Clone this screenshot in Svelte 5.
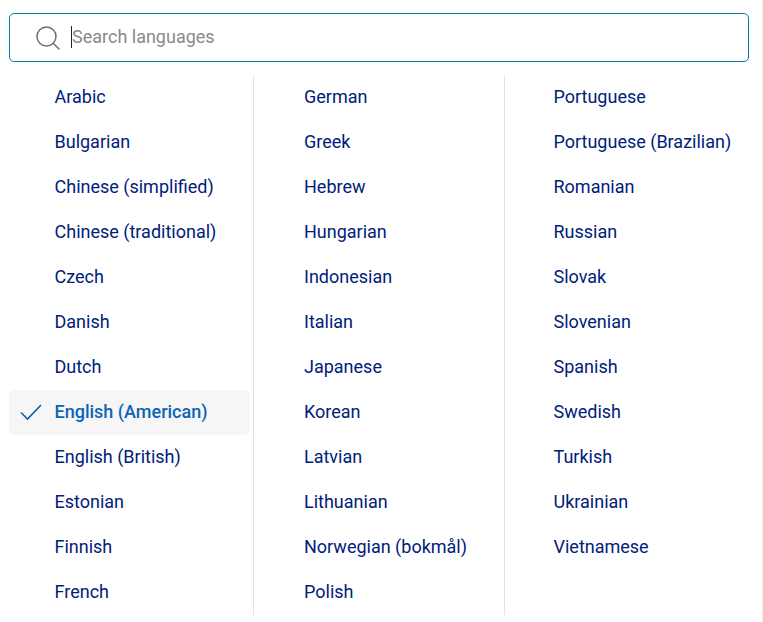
<script>
  const columns = [
    ['Arabic', 'Bulgarian', 'Chinese (simplified)', 'Chinese (traditional)', 'Czech', 'Danish', 'Dutch', 'English (American)', 'English (British)', 'Estonian', 'Finnish', 'French'],
    ['German', 'Greek', 'Hebrew', 'Hungarian', 'Indonesian', 'Italian', 'Japanese', 'Korean', 'Latvian', 'Lithuanian', 'Norwegian (bokmål)', 'Polish'],
    ['Portuguese', 'Portuguese (Brazilian)', 'Romanian', 'Russian', 'Slovak', 'Slovenian', 'Spanish', 'Swedish', 'Turkish', 'Ukrainian', 'Vietnamese']
  ]
  const selected = 'English (American)'
</script>

<div class="picker">
  <div class="search">
    <svg class="search__icon" width="26" height="26" viewBox="0 0 26 26" fill="none" stroke="#6f6f6f" stroke-width="1.5">
      <circle cx="11.5" cy="11.5" r="9.5" />
      <path d="M18.5 18.5 L24 24" stroke-linecap="round" />
    </svg>
    <span class="search__caret"></span>
    <span class="search__placeholder">Search languages</span>
  </div>

  <div class="columns">
    {#each columns as column}
      <ul class="column">
        {#each column as lang}
          <li class="item" class:item--selected={lang === selected}>
            {#if lang === selected}
              <svg class="item__check" width="24" height="18" viewBox="0 0 24 18" fill="none" stroke="#0b5cad" stroke-width="1.6">
                <path d="M2 9.5 L8.5 16 L22 2" />
              </svg>
            {/if}
            {lang}
          </li>
        {/each}
      </ul>
    {/each}
  </div>
</div>

<style>
  :global(body) {
    margin: 0;
    background: #fff;
  }
  .picker {
    box-sizing: border-box;
    width: 763px;
    height: 622px;
    padding: 13px 1px 0 9px;
    border-right: 1px solid #ececec;
    font-family: Roboto, "Liberation Sans", sans-serif;
    overflow: hidden;
  }
  .search {
    box-sizing: border-box;
    width: 740px;
    height: 49px;
    border: 1px solid #0b7aa8;
    border-radius: 5px;
    display: flex;
    align-items: center;
    padding: 0 0 1px 25px;
  }
  .search__icon {
    flex: none;
    margin-right: 10px;
    margin-top: 1px;
  }
  .search__caret {
    width: 1px;
    height: 22px;
    background: #222;
    flex: none;
  }
  .search__placeholder {
    font-size: 18px;
    color: #8a8a8a;
    margin-bottom: 2px;
  }
  .columns {
    display: grid;
    grid-template-columns: 244px 251px 250px;
    margin-top: 13px;
  }
  .column {
    list-style: none;
    margin: 0;
    padding: 0 3px 0 0;
    height: 540px;
  }
  .column + .column {
    border-left: 1px solid #e2e2e2;
    padding-left: 3px;
  }
  .column:nth-child(2) {
    padding-left: 4px;
  }
  .item {
    position: relative;
    box-sizing: border-box;
    height: 45px;
    line-height: 44px;
    padding-left: 45.5px;
    font-size: 18px;
    color: #00207a;
    white-space: nowrap;
  }
  .column:nth-child(2) .item {
    padding-left: 46px;
  }
  .item--selected {
    background: #f6f6f6;
    border-radius: 5px;
    color: #0b64b8;
    font-weight: 500;
  }
  .item__check {
    position: absolute;
    left: 10px;
    top: 13px;
  }
</style>
